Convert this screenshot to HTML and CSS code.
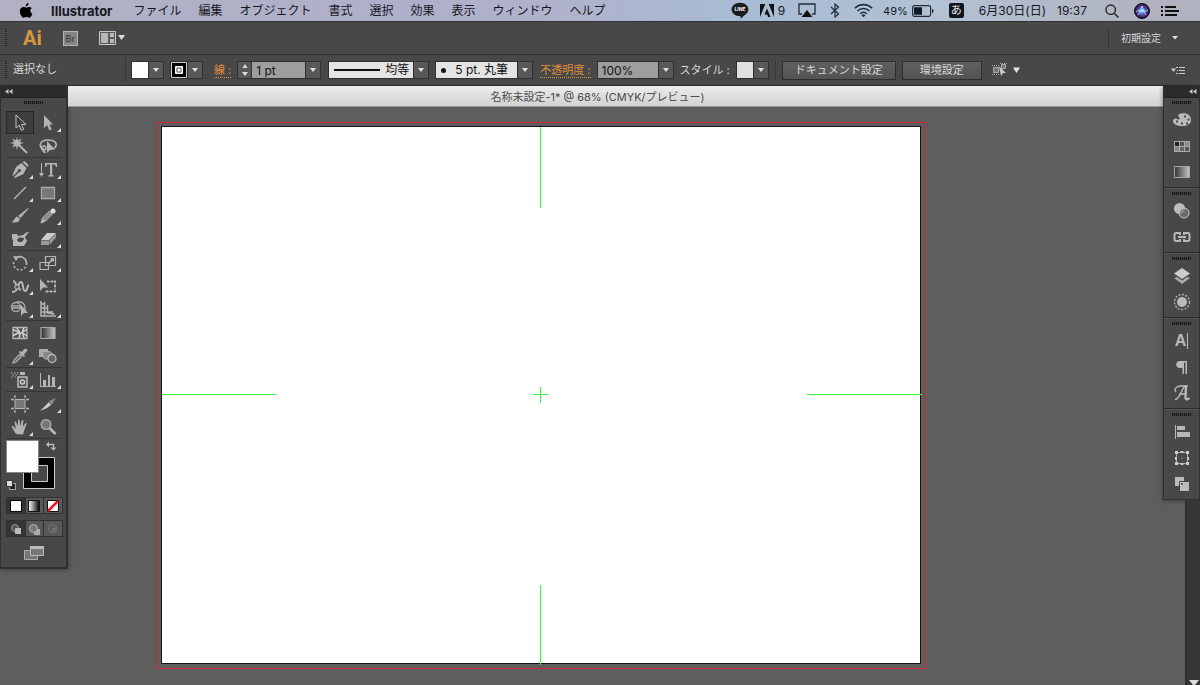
FILE: index.html
```html
<!DOCTYPE html>
<html lang="ja">
<head>
<meta charset="utf-8">
<title>Illustrator</title>
<link rel="stylesheet" href="styles.css">
</head>
<body>
<svg class="defs" aria-hidden="true">
  <defs>
    <linearGradient id="ramp"><stop offset="0" stop-color="#303030"/><stop offset="1" stop-color="#c8c8c8"/></linearGradient>
    <linearGradient id="ramp-rev"><stop offset="0" stop-color="#fff"/><stop offset="1" stop-color="#000"/></linearGradient>
    <radialGradient id="siri"><stop offset="0" stop-color="#d6f4ff"/><stop offset=".35" stop-color="#3d86d8"/><stop offset=".65" stop-color="#6a2a8c"/><stop offset="1" stop-color="#11132c"/></radialGradient>
    <symbol id="down" viewBox="0 0 8 6"><path fill="#e0e0e0" d="M1 1h6L4 5z"/></symbol>
  </defs>
</svg>

<header class="menubar">
  <button class="apple" aria-label="アップルメニュー"><svg width="14" height="16" viewBox="0 0 14 16"><path d="M9.6 0c.1 1.600-1.200 3.200-2.800 3.200C6.600 1.700 8 .2 9.600 0zM12.800 5.300c-2.200 1.400-1.900 4.400.6 5.400-.7 2-2 4-3.300 4-1 0-1.500-.6-2.700-.6s-1.700.6-2.700.6C3 14.700.8 11.300.8 8.300c0-2.800 1.800-4.400 3.600-4.400 1.200 0 2 .7 2.900.7.800 0 1.800-.8 3.200-.7 1 .1 1.800.5 2.300 1.400z"/></svg></button>
  <nav class="menus">
    <button class="app-name">Illustrator</button>
    <button>ファイル</button>
    <button>編集</button>
    <button>オブジェクト</button>
    <button>書式</button>
    <button>選択</button>
    <button>効果</button>
    <button>表示</button>
    <button>ウィンドウ</button>
    <button>ヘルプ</button>
  </nav>
  <div class="status">
    <svg width="18" height="17" viewBox="0 0 18 17"><path fill="#1b1b1b" d="M9 .8c4.700 0 8.400 2.900 8.400 6.600 0 3.300-3 5-7.400 9-.5 0-.4-1.500-.6-2.300C4.300 14.200.6 11.200.6 7.400.6 3.700 4.300.8 9 .8z"/><text class="line-mark" x="9" y="9">LINE</text></svg>
    <span class="adobe"><svg width="14" height="13" viewBox="0 0 14 13"><path fill="#111" d="M0 0h5.300L0 13zM8.700 0H14v13zM7 4.500l3.500 8.500H8.200l-1-2.600H4.500z"/></svg>9</span>
    <svg width="18" height="15" viewBox="0 0 18 15"><path fill="none" stroke="#222b3a" stroke-width="1.300" d="M4 11H1V1h16v10h-3"/><path fill="#111" d="M9 7l5.500 7h-11z"/></svg>
    <svg class="bluetooth" width="10" height="15" viewBox="0 0 10 15"><path fill="none" stroke="#222b3a" stroke-width="1.200" d="M1 4l7.500 7L5 14V1l3.500 3L1 11"/></svg>
    <svg class="wifi" width="19" height="15" viewBox="0 0 19 15"><g fill="none" stroke="#222b3a" stroke-width="1.600"><path d="M.8 5.200a12.300 12.300 0 0 1 17.400 0"/><path d="M3.500 8a8.500 8.500 0 0 1 12 0"/><path d="M6.200 10.700a4.700 4.700 0 0 1 6.600 0"/></g><path fill="#222b3a" d="M7.600 12.200a2.700 2.700 0 0 1 3.800 0L9.500 14.200z"/></svg>
    <span class="battery">49%<svg width="22" height="12" viewBox="0 0 22 12"><rect x=".6" y=".6" width="18" height="10.800" rx="1.800" fill="none" stroke="#222b3a" stroke-width="1.200"/><path fill="#111827" d="M2 2.200h8v7.600H2zM20 4c2 .7 2 3.300 0 4z"/></svg></span>
    <span class="ime">あ</span>
    <time class="clock"><span>6月30日(日)</span><span>19:37</span></time>
    <svg class="search" width="14" height="14" viewBox="0 0 14 14"><g fill="none" stroke="#222" stroke-width="1.400"><circle cx="5.700" cy="5.700" r="4.700"/><path d="M9 9l4.500 4.500"/></g></svg>
    <svg class="siri" width="16" height="16" viewBox="0 0 16 16"><circle cx="8" cy="8" r="7.500" fill="url(#siri)" stroke="#0b1028"/><path d="M2 9c4-4 8 1 12-2M4 12c2-3 3-6 4-9 1 3 2 6 4 9" fill="none" stroke="#b9e9f6" stroke-width=".8"/></svg>
    <svg class="list" width="18" height="12" viewBox="0 0 18 12"><path stroke="#111" stroke-width="1.800" d="M0 2h2M0 6h2M0 10h2M4 2h11M4 6h14M4 10h12"/></svg>
  </div>
</header>

<div class="appbar">
  <i class="grip-v"></i>
  <span class="ai">Ai</span>
  <button class="bridge">Br</button>
  <button class="arrange" aria-label="ドキュメントレイアウト"><svg width="26" height="14" viewBox="0 0 26 14"><path fill="#5a5a5a" stroke="#c8c8c8" d="M.5.5h16v13H.5z"/><path fill="#b8b8b8" d="M2 2h7v10H2zM11 2h4v4h-4zM11 8h4v4h-4z"/><path fill="#ddd" d="M19 4h7l-3.500 5z"/></svg></button>
  <button class="workspace">初期設定<svg width="6" height="4" viewBox="0 0 6 4"><path fill="#ddd" d="M0 0h6L3 3.500z"/></svg></button>
</div>

<div class="control">
  <i class="grip-v"></i>
  <span class="selection">選択なし</span>
  <div class="combo fill"><button class="swatch white" aria-label="塗り"></button><button class="drop" aria-label="塗りメニュー"><svg width="8" height="6"><use href="#down"/></svg></button></div>
  <div class="combo stroke"><button class="swatch ring" aria-label="線"><svg width="16" height="16" viewBox="0 0 16 16"><path d="M0 0h16v16H0z"/><path d="M.5.5h15v15H.5z" fill="none" stroke="#ccc"/><path d="M4.500 4.500h7v7h-7z" fill="#eee" stroke="#fff"/><path d="M6 6h4v4H6z" fill="#fff" stroke="#555"/></svg></button><button class="drop" aria-label="線メニュー"><svg width="8" height="6"><use href="#down"/></svg></button></div>
  <label class="link" for="weight">線 :</label>
  <div class="combo weight"><div class="stepper"><button aria-label="増やす"><svg width="8" height="6" viewBox="0 0 8 6"><path fill="#ddd" d="M1.500 5h5L4 1z"/></svg></button><button aria-label="減らす"><svg width="8" height="6"><use href="#down"/></svg></button></div><input id="weight" value="1 pt"><button class="drop" aria-label="線幅"><svg width="8" height="6"><use href="#down"/></svg></button></div>
  <div class="combo profile"><i class="line-sample"></i><select aria-label="プロファイル"><option>均等</option></select><button class="drop" aria-label="プロファイル一覧"><svg width="8" height="6"><use href="#down"/></svg></button></div>
  <div class="combo brush"><i class="dot-sample"></i><select aria-label="ブラシ"><option>5 pt. 丸筆</option></select><button class="drop" aria-label="ブラシ一覧"><svg width="8" height="6"><use href="#down"/></svg></button></div>
  <label class="link opacity-label" for="opacity">不透明度 :</label>
  <div class="combo opacity"><input id="opacity" value="100%"><button class="drop" aria-label="不透明度一覧"><svg width="8" height="6"><use href="#down"/></svg></button></div>
  <span class="style-label">スタイル :</span>
  <div class="combo style"><button class="swatch pale" aria-label="スタイル"></button><button class="drop" aria-label="スタイル一覧"><svg width="8" height="6"><use href="#down"/></svg></button></div>
  <div class="actions"><button class="push">ドキュメント設定</button><button class="push prefs">環境設定</button></div>
  <button class="similar" aria-label="類似オブジェクトを選択"><svg width="28" height="14" viewBox="0 0 28 14"><path fill="#777" stroke="#aaa" d="M1.500 4.500h5v5h-5zM9.500 1.500h4v4h-4z"/><path stroke="#aaa" stroke-dasharray="1 1" d="M0 2.500h8M0 11.500h8M8 .5h7"/><path fill="#ccc" d="M7 3l7 7h-3l-2 3z"/><path fill="#e6e6e6" d="M21 4.500h7L24.500 10z"/></svg></button>
  <button class="panel-menu" aria-label="パネルメニュー"><svg width="14" height="9" viewBox="0 0 14 9"><path fill="#ccc" d="M0 2.500h5L2.500 6z"/><path stroke="#ccc" d="M5 1.500h2M8 1.500h6M6 4.500h1M8 4.500h6M5 7.500h2M8 7.500h6"/></svg></button>
</div>

<main class="work">
  <aside class="tools">
    <div class="panel-head"><svg width="8" height="5" viewBox="0 0 8 5"><path fill="#ccc" d="M3.500 0v5L0 2.500zM7.500 0v5L4 2.500z"/></svg></div>
    <i class="grip-h"></i>
    <div class="group">
      <button class="active" aria-label="選択"><svg viewBox="0 0 20 20"><path fill="#3b3b3b" stroke="#c4c4c4" d="M6 2v13l3.200-2.800 2.200 5.200 2.300-1-2.200-5H16z"/></svg></button>
      <button class="more" aria-label="ダイレクト選択"><svg viewBox="0 0 20 20"><path d="M6 2v13l3.200-2.800 2.200 5.200 2.300-1-2.200-5H15z"/></svg></button>
      <button aria-label="自動選択"><svg viewBox="0 0 20 20"><path d="M7 1l1 3.500 3.500-2L10 6l4 1-4 1 1.500 3.500L8 10l-1 4-1-4-3.500 1.500L4 8 0 7l4-1L2.500 2.500 6 4.500z"/><path stroke="#b4b4b4" stroke-width="2" d="M9.500 9.500L17 17"/></svg></button>
      <button aria-label="なげなわ"><svg viewBox="0 0 20 20"><path fill="none" stroke="#b4b4b4" stroke-width="1.700" d="M6 13C0 12 1 4 10 4s10 6 6 8M6 10c-3 0-3 4 0 4s2-4 0-4m-1 4c0 2 2 2 2 3"/><path d="M9 5v12l3-3 5-.5z"/></svg></button>
    </div>
    <div class="group">
      <button class="more" aria-label="ペン"><svg viewBox="0 0 20 20"><path d="M11.500 3l5 5-3 6L5 18l-1-1 5-5a1.500 1.500 0 1 0-1-1l-5 5-.5-1L6 7zM12.500 2l2-1 4 4-1 2z"/></svg></button>
      <button class="more" aria-label="文字"><svg viewBox="0 0 20 20"><path d="M7 3h12v4h-1l-1-2.500h-2.800V15l2 .8v.8H10v-.8l2-.8V4.500H9L8 7H7zM3 3h1v10h2l-2.500 4L1 13h2z"/></svg></button>
      <button class="more" aria-label="直線"><svg viewBox="0 0 20 20"><path stroke="#b4b4b4" stroke-width="1.500" d="M4 16L16 4"/></svg></button>
      <button class="more" aria-label="長方形"><svg viewBox="0 0 20 20"><path fill="#777" stroke="#aaa" stroke-width="1.300" d="M3.500 4.500h13v11h-13z"/></svg></button>
      <button aria-label="ブラシ"><svg viewBox="0 0 20 20"><path d="M18 2l.5.800L10.500 12 8.300 9.800zM7.500 10.500l2.400 2.300C9 17 5 17 1.500 16c3-1 3-5 6-5.500z"/></svg></button>
      <button class="more" aria-label="鉛筆"><svg viewBox="0 0 20 20"><path fill="#8c8c8c" stroke="#b4b4b4" d="M3 17l1.500-5 7-7 3 3-7 7z"/><circle cx="15" cy="5" r="2.500" fill="#ddd"/><path d="M2.500 17.500l2-5 3 3z"/></svg></button>
      <button aria-label="塗りブラシ"><svg viewBox="0 0 20 20"><path fill-rule="evenodd" d="M2 5h5l1 2c3 0 3-1 5-1l4-3h2l-4 5 2 4-3 5H3v-6l-1-1zm5 6c2 4 7 2 7-2-2 0-5-2-7 2z"/></svg></button>
      <button class="more" aria-label="消しゴム"><svg viewBox="0 0 20 20"><path fill="#ccc" d="M9 4h9l-7 7H3z"/><path fill="#999" d="M3 11.500h8V16H3zM11.500 11L18 4.500v4L11.500 16z"/></svg></button>
    </div>
    <div class="group">
      <button class="more" aria-label="回転"><svg viewBox="0 0 20 20"><path fill="none" stroke="#b4b4b4" stroke-width="1.700" d="M7 4.500A6.500 6.500 0 0 1 16.500 10"/><path fill="none" stroke="#b4b4b4" stroke-width="1.700" stroke-dasharray="2 2" d="M16.500 10A6.500 6.500 0 1 1 4 8"/><path d="M3 3l6 .5L6 8z"/></svg></button>
      <button class="more" aria-label="拡大・縮小"><svg viewBox="0 0 20 20"><path fill="none" stroke="#b4b4b4" stroke-width="1.200" d="M7.500 3.500h10v9h-10zM2 9.500h8.500v7H2z"/><path d="M12 5h4v4l-1.300-1.300L11 11l-1-1 3.300-3.700z"/></svg></button>
      <button class="more" aria-label="線幅"><svg viewBox="0 0 20 20"><path fill="none" stroke="#b4b4b4" stroke-width="2" d="M2 16c8 0 5-10 9-10 3 0 1 9 4 9s2-6 4-6M3 5c3 0 4 8 8 9"/><circle cx="7" cy="11" r="2.200" fill="#555" stroke="#ccc"/></svg></button>
      <button aria-label="自由変形"><svg viewBox="0 0 20 20"><path d="M2 3v12l3-3.500h5z"/><path fill="none" stroke="#999" d="M9 5.500h8v10H7"/><path d="M9 4.500h2v2H9zM13 4.500h2v2h-2zM16 4.500h2v2h-2zM16 9h2v2h-2zM16 14.500h2v2h-2zM12 14.500h2v2h-2zM8 14.500h2v2H8z"/></svg></button>
      <button class="more" aria-label="シェイプ形成"><svg viewBox="0 0 20 20"><g fill="none" stroke="#aaa" stroke-width="1.300"><circle cx="6" cy="8" r="4.500"/><path d="M5 4c3-2 9-2 10 4v3M2 7h9M2 9h9"/></g><path d="M11 6v11l2.700-3H18z"/></svg></button>
      <button class="more" aria-label="遠近グリッド"><svg viewBox="0 0 20 20"><path fill="none" stroke="#b4b4b4" stroke-width="1.500" d="M3 2v15h15M3 13h12M3 9h7M3 5h4M6.500 3v14M9.500 6v8l7 1"/></svg></button>
    </div>
    <div class="group">
      <button aria-label="メッシュ"><svg viewBox="0 0 20 20"><path fill="#555" stroke="#b4b4b4" stroke-width="1.300" d="M3 4.500h14v11H3z"/><path fill="none" stroke="#ccc" stroke-width="1.500" d="M3 7c5 0 5 4 8 3s3-3 6-3M3 13c3-3 5-3 8-3s4 2 6 3M7 5c1 3 5 4 2 10M14 5c-3 4-1 7 0 10"/></svg></button>
      <button aria-label="グラデーション"><svg viewBox="0 0 20 20"><path fill="url(#ramp)" stroke="#aaa" stroke-width="1.200" d="M3 4.500h14v11H3z"/></svg></button>
      <button class="more" aria-label="スポイト"><svg viewBox="0 0 20 20"><path fill="#666" stroke="#b4b4b4" stroke-width="1.200" d="M3 17l1-3 6-6 2 2-6 6z"/><path d="M9 6l1-1 2 1c2-4 6-4 5-1-1 2-3 3-3 3l1 2-1 1z"/></svg></button>
      <button aria-label="ブレンド"><svg viewBox="0 0 20 20"><path d="M1 3h9v2H6v6H1z" fill="#aaa"/><path d="M5 5.500h7l2 2V13H7l-2-2z" fill="#888" stroke="#aaa"/><circle cx="14" cy="12.500" r="4" fill="#666" stroke="#bbb" stroke-width="1.300"/></svg></button>
    </div>
    <div class="group">
      <button class="more" aria-label="シンボルスプレー"><svg viewBox="0 0 20 20"><path d="M10 2h5v3h-5z"/><path fill="#555" stroke="#bbb" stroke-width="1.500" d="M8 7h9v10H8z"/><circle cx="12.500" cy="12" r="2" fill="none" stroke="#ccc" stroke-width="1.500"/><path stroke="#aaa" stroke-dasharray="1.500 1.500" d="M1 3h8M2.500 5h6M1 7h5"/></svg></button>
      <button class="more" aria-label="グラフ"><svg viewBox="0 0 20 20"><path d="M2 3h1v13h15v1H2zM5 10h3v6H5zM10 5h2v11h-2zM14 7h3v9h-3z"/></svg></button>
    </div>
    <div class="group">
      <button aria-label="アートボード"><svg viewBox="0 0 20 20"><path fill="#777" stroke="#b4b4b4" d="M5 5.500h10v9H5z"/><path stroke="#b4b4b4" stroke-width="1.300" d="M1 5.500h3M16 5.500h3M1 14.500h3M16 14.500h3M5 1v3M15 1v3M5 16v3M15 16v3"/></svg></button>
      <button class="more" aria-label="スライス"><svg viewBox="0 0 20 20"><path fill="#ccc" d="M2 17l9-9 2 3-4 3z"/><path fill="#888" d="M11 7l7-3-4.500 7z"/></svg></button>
      <button class="more" aria-label="手のひら"><svg viewBox="0 0 20 20"><path d="M6 17L1.500 9.500l1.300-.8L6 12 4.500 5l1.300-.5L8 9.500V2.700h1.500l.8 6.500L12 3l1.400.3-.6 6.700L15.500 6l1.200.6-2.500 7-1.200 4z"/></svg></button>
      <button aria-label="ズーム"><svg viewBox="0 0 20 20"><circle cx="8" cy="7.500" r="4.700" fill="#777" stroke="#aaa" stroke-width="1.600"/><path stroke="#bbb" stroke-width="2.500" d="M11.500 11l6 6"/></svg></button>
    </div>
    <div class="colors">
      <svg width="54" height="54" viewBox="0 0 54 54"><path fill="#000" stroke="#ccc" d="M22.500 18.500h31v31h-31z"/><path fill="#484848" stroke="#ccc" d="M30.500 26.500h16v16h-16z"/><path fill="#fff" stroke="#888" d="M5.500 1.500h32v32h-32z"/><path fill="none" stroke="#bbb" stroke-width="1.300" d="M47 5.500h5.500V10"/><path fill="#bbb" d="M48 2.500v6l-3-3zM49.500 8.500h6l-3 3z"/><path fill="#222" stroke="#aaa" d="M8.500 44.500h6v6h-6z"/><path fill="#ddd" stroke="#333" d="M5.500 41.500h6v6h-6z"/></svg>
    </div>
    <div class="triple paint">
      <button class="on" aria-label="カラー"><svg width="12" height="12"><path fill="#fff" stroke="#000" d="M.5.5h11v11H.5z"/></svg></button>
      <button aria-label="グラデーション塗り"><svg width="12" height="12"><path fill="url(#ramp-rev)" stroke="#111" d="M.5.5h11v11H.5z"/></svg></button>
      <button aria-label="なし"><svg width="12" height="12"><path fill="#fff" stroke="#111" d="M.5.5h11v11H.5z"/><path stroke="#f0141e" stroke-width="2.500" d="M1 11L11 1"/></svg></button>
    </div>
    <div class="triple modes">
      <button class="on" aria-label="標準描画"><svg width="12" height="12"><circle cx="5" cy="5" r="3.500" fill="#555" stroke="#999"/><path fill="#bbb" d="M5 5h6v6H5z"/></svg></button>
      <button aria-label="背面描画"><svg width="12" height="12"><path fill="#aaa" d="M6 6h6v6H6z"/><circle cx="5.500" cy="5.500" r="4" fill="#777" stroke="#bbb"/></svg></button>
      <button aria-label="内側描画" disabled><svg width="12" height="12"><circle cx="5.500" cy="5.500" r="4" fill="none" stroke="#777"/><path fill="#777" d="M5 5h4L6 9z"/></svg></button>
    </div>
    <button class="screen" aria-label="スクリーンモード"><svg width="20" height="16" viewBox="0 0 20 16"><path fill="#777" stroke="#aaa" d="M.5 5.500h13v9H.5z"/><path fill="#777" stroke="#bbb" d="M6.500 1.500h13v9h-13z"/><path fill="#bbb" d="M6 1h14v3H6z"/></svg></button>
  </aside>

  <section class="document">
    <h1 class="doc-title">名称未設定-1* @ 68% (CMYK/プレビュー)</h1>
    <div class="canvas">
      <div class="bleed">
        <div class="artboard">
          <svg class="guides" width="100%" height="100%" viewBox="0 0 758 536"><path stroke="#3ef53e" fill="none" d="M378.500 0v81M378.500 458v80M0 267.500h114M645 267.500h115M371 267.500h15M378.500 260v16"/></svg>
        </div>
      </div>
    </div>
  </section>

  <div class="right">
    <aside class="dock">
      <div class="panel-head"><svg width="8" height="5" viewBox="0 0 8 5"><path fill="#ccc" d="M3.500 0v5L0 2.500zM7.500 0v5L4 2.500z"/></svg></div>
      <div class="dock-group">
        <i class="grip-h"></i>
        <button aria-label="カラー"><svg viewBox="0 0 20 20"><path fill="#bbb" fill-rule="evenodd" d="M7 4c7-2 12 1 12 6 0 4-4 6-9 6S1 14 1 11c0-2 2-3 4-2s4 0 2-2c-1-1-1-2 0-3zm5 1.500v2h2v-2zm3.500 3v2h2v-2zm-1.500 4v2h2v-2zm-5 0v2h2v-2zm-5-2v2h2v-2z"/></svg></button>
        <button aria-label="スウォッチ"><svg viewBox="0 0 20 20"><path fill="#aaa" d="M2 5h16v11H2z"/><path fill="#222" d="M3 6h4v4H3z"/><path fill="#555" d="M8 6h4v4H8zM13 11h4v4h-4z"/><path fill="#888" d="M13 6h4v4h-4zM3 11h4v4H3z"/><path fill="#666" d="M8 11h4v4H8z"/></svg></button>
        <button aria-label="グラデーションパネル"><svg viewBox="0 0 20 20"><path fill="url(#ramp)" stroke="#aaa" d="M2.500 4.500h15v11h-15z"/></svg></button>
      </div>
      <div class="dock-group">
        <i class="grip-h"></i>
        <button aria-label="透明"><svg viewBox="0 0 20 20"><circle cx="7.500" cy="7.500" r="5.500" fill="#bbb"/><circle cx="12" cy="12" r="5" fill="#777" fill-opacity=".7" stroke="#ccc"/></svg></button>
        <button aria-label="リンク"><svg viewBox="0 0 20 20"><path fill="none" stroke="#b8b8b8" stroke-width="2" d="M8 8V6H4Q2.500 6 2.500 8v4q0 2 1.500 2h4v-2M12 8V6h4q1.500 0 1.500 2v4q0 2-1.500 2h-4v-2M6 10h8"/></svg></button>
      </div>
      <div class="dock-group">
        <i class="grip-h"></i>
        <button aria-label="レイヤー"><svg viewBox="0 0 20 20"><path fill="#ccc" d="M10 2l8 5.500-8 5.500-8-5.500z"/><path fill="#aaa" d="M2 12l3-1 5 3.500 5-3.500 3 1-8 6z"/></svg></button>
        <button aria-label="アピアランス"><svg viewBox="0 0 20 20"><circle cx="10" cy="10" r="5" fill="#bbb"/><circle cx="10" cy="10" r="7.500" fill="none" stroke="#aaa" stroke-width="1.500" stroke-dasharray="2 1.500"/></svg></button>
      </div>
      <div class="dock-group">
        <i class="grip-h"></i>
        <button class="glyph" aria-label="文字パネル">A<i class="caret"></i></button>
        <button aria-label="段落"><svg viewBox="0 0 20 20"><path fill="#bbb" d="M8 4h7v13h-1.500V5.500H12V17h-1.500v-6H8c-5 0-5-7 0-7z"/></svg></button>
        <button aria-label="文字スタイル"><svg viewBox="0 0 20 20"><path fill="none" stroke="#bbb" stroke-width="1.300" d="M4 9C1 6 5 3 9 3h7M13 3C9 7 8 16 3 16.500M7 11h7"/><path fill="none" stroke="#bbb" stroke-width="2.300" d="M14 3l-.5 11c0 3 2 3 4 1"/></svg></button>
      </div>
      <div class="dock-group">
        <i class="grip-h"></i>
        <button aria-label="整列"><svg viewBox="0 0 20 20"><path fill="#b8b8b8" d="M3 3h1v14H3zM5 4h8v4H5zM5 10h13v5H5z"/></svg></button>
        <button aria-label="変形"><svg viewBox="0 0 20 20"><path fill="none" stroke="#aaa" d="M4.500 4.500h11v11h-11z"/><path fill="#ccc" d="M3 3h3v3H3zM8.500 3h3v2h-3zM14 3h3v3h-3zM3 9h2v3H3zM15 9h2v3h-2zM3 14h3v3H3zM8.500 15h3v2h-3zM14 14h3v3h-3zM9.500 9.500h1v1h-1z"/></svg></button>
        <button aria-label="パスファインダー"><svg viewBox="0 0 20 20"><path fill="#bbb" d="M3 3h9v9H3z"/><path fill="#bbb" stroke="#444" d="M7.500 7.500h10v10h-10z"/><path fill="#555" stroke="#ccc" d="M8.500 8.500h3v3h-3z"/></svg></button>
      </div>
    </aside>
    <div class="scrollbar"><svg width="10" height="8" viewBox="0 0 10 8"><path fill="#ddd" d="M0 3h10L6 8H4z"/></svg></div>
  </div>
</main>
</body>
</html>
```
FILE: styles.css
```css
* { box-sizing: border-box; }
html, body { height: 100%; }
body {
  margin: 0;
  display: flex;
  flex-direction: column;
  overflow: hidden;
  background: #5e5e5e;
  font: 12px/16px Inter, "Noto Sans CJK JP", sans-serif;
  color: #d8d8d8;
}
button, input, select {
  margin: 0;
  padding: 0;
  border: 0;
  border-radius: 0;
  background: none;
  color: inherit;
  font: inherit;
}
button, .status, label, .selection, .style-label { white-space: nowrap; }
svg { display: block; flex: none; }
.defs { position: absolute; width: 0; height: 0; }

/* System menu bar */
.menubar {
  flex: none;
  height: 21px;
  display: flex;
  align-items: center;
  padding: 0 21px 0 19px;
  background: linear-gradient(90deg, #b1b1c3, #aeb0ca 35%, #b0b2cb 46%, #a8bbd4 62%, #b2c1d3 78%, #b1b2bf 96%);
  color: #15171f;
}
.menus { display: flex; gap: 17px; margin-left: 18px; }
.menus .app-name { margin-right: 4px; font-size: 13px; font-weight: 700; }
.status { display: flex; align-items: center; margin-left: auto; }
.line-mark { font: 700 5px Inter, sans-serif; fill: #fff; text-anchor: middle; }
.adobe { display: flex; align-items: center; gap: 4px; margin: 0 13px 0 11px; }
.bluetooth, .wifi { margin-left: 14px; }
.battery { display: flex; align-items: center; gap: 4px; margin-left: 10px; font-size: 11px; }
.ime {
  width: 15px;
  height: 15px;
  margin: 0 15px 0 15px;
  border-radius: 2px;
  background: #11131e;
  color: #e8e8f0;
  font-size: 11px;
  line-height: 14px;
  text-align: center;
}
.clock { display: flex; gap: 11px; }
.search { margin-left: 18px; }
.siri { margin-left: 15px; }
.list { margin-left: 11px; }

/* Application bar */
.appbar {
  flex: none;
  height: 34px;
  display: flex;
  align-items: center;
  padding: 0 22px 0 5px;
  background: #484848;
  border-top: 1px solid #303030;
  border-bottom: 1px solid #303030;
}
.grip-v {
  width: 2px;
  height: 18px;
  background: repeating-linear-gradient(#202020 0 1px, #505050 1px 2px);
}
.grip-h {
  display: block;
  width: 19px;
  height: 3px;
  margin: 0 auto;
  background: repeating-linear-gradient(90deg, #181818 0 1px, #3c3c3c 1px 2px);
}
.ai { margin-left: 16px; color: #db963f; font: 700 20px/24px Roboto, sans-serif; }
.bridge {
  width: 15px;
  height: 15px;
  margin-left: 21px;
  border: 1px solid #b4b4b4;
  background: #858585;
  color: #333;
  font-size: 9px;
  line-height: 13px;
}
.arrange { margin-left: 21px; }
.workspace {
  display: flex;
  align-items: center;
  gap: 11px;
  height: 19px;
  margin-left: auto;
  padding-left: 12px;
  border-left: 1px solid #353535;
  font-size: 10px;
}

/* Control panel */
.control {
  flex: none;
  height: 31px;
  display: flex;
  align-items: center;
  padding: 0 15px 0 5px;
  background: #484848;
  border-bottom: 1px solid #2c2c2c;
  font-size: 11px;
}
.selection { width: 113px; height: 24px; margin-left: 6px; border-right: 1px solid #383838; line-height: 22px; }
.combo {
  display: flex;
  height: 18px;
  border: 1px solid #303030;
  background: #e4e4e4;
  color: #111;
  font-size: 12px;
}
.drop {
  width: 15px;
  flex: none;
  display: grid;
  place-items: center;
  border-left: 1px solid #303030;
  background: #585858;
}
.swatch { width: 16px; flex: none; }
.white { background: #fff; }
.pale { background: #e0e0e0; }
.fill { margin-left: 5px; }
.stroke { margin-left: 6px; }
.link { color: #e08e3a; border-bottom: 1px dotted #e08e3a; line-height: 14px; margin-left: 11px; }
.weight { width: 84px; margin-left: 6px; }
.stepper { width: 14px; flex: none; display: grid; background: #585858; border-right: 1px solid #303030; }
.stepper button { display: grid; place-items: center; }
.combo input { flex: 1; min-width: 0; padding: 2px 4px 0; background: #9e9e9e; }
.profile { width: 101px; margin-left: 7px; }
.combo select { flex: 1; min-width: 0; appearance: none; }
.line-sample { width: 46px; height: 2px; margin: 7px 5px 0; background: #111; }
.brush { width: 98px; margin-left: 6px; }
.dot-sample { width: 5px; height: 5px; margin: 6px 9px 0 5px; border-radius: 50%; background: #111; }
.link.opacity-label { margin-left: 7px; }
.opacity { width: 77px; margin-left: 6px; }
.style-label { margin-left: 6px; }
.style { margin-left: 6px; }
.actions { display: flex; gap: 6px; margin-left: 6px; padding-left: 6px; border-left: 1px solid #383838; }
.push {
  height: 19px;
  padding: 0 12px;
  border: 1px solid #2e2e2e;
  background: linear-gradient(#606060, #535353);
  line-height: 16px;
}
.push.prefs { padding: 0 17px; }
.similar { margin-left: 10px; }
.panel-menu { margin-left: auto; }

/* Tool panel */
.work { flex: 1; min-height: 0; display: flex; align-items: stretch; }
.tools {
  width: 68px;
  flex: none;
  align-self: flex-start;
  padding-bottom: 6px;
  background: #484848;
  border: 1px solid #303030;
  border-width: 0 2px 2px 1px;
  box-shadow: 1px 1px 4px #0005;
}
.panel-head { height: 12px; display: flex; align-items: center; padding-left: 4px; background: #2b2b2b; border-bottom: 1px solid #222; }
.tools > .grip-h { margin: 3px auto 7px; }
.group {
  display: grid;
  grid-template-columns: 28px 28px;
  grid-auto-rows: 23px;
  margin: 0 4px 0 5px;
  border-bottom: 1px solid #353535;
}
.group button { position: relative; display: grid; place-items: center; border: 1px solid transparent; }
.group svg { width: 20px; height: 20px; fill: #b4b4b4; }
.group .active { border-color: #272727; background: #3d3d3d; }
.more::after {
  content: "";
  position: absolute;
  right: 0;
  bottom: 1px;
  border: 2px solid;
  border-color: transparent #ddd #ddd transparent;
}
.colors svg { overflow: visible; }
.triple { display: grid; grid-template-columns: repeat(3, 1fr); width: 57px; height: 17px; margin: 0 0 6px 5px; border: 1px solid #303030; background: #303030; gap: 1px; }
.triple button { display: grid; place-items: center; background: #585858; }
.triple .on { background: #353535; }
.paint { margin-top: 4px; }
.screen { display: block; margin: 8px auto 0; }

/* Document */
.document { flex: 1; min-width: 0; display: flex; flex-direction: column; }
.doc-title {
  flex: none;
  height: 21px;
  margin: 0;
  padding-right: 36px;
  background: linear-gradient(#ececec, #d2d2d2);
  border-bottom: 1px solid #999;
  color: #4c4c4c;
  font-size: 11px;
  font-weight: 400;
  line-height: 22px;
  text-align: center;
}
.canvas { flex: 1; min-height: 0; padding: 15px 238px 16px 88px; }
.bleed { height: 100%; padding: 3px 3px 4px 4px; border: 1px solid #cf2633; }
.artboard { height: 100%; border: 1px solid #141414; background: #fff; }
.guides { overflow: visible; }

/* Panel dock */
.right { width: 37px; flex: none; display: flex; flex-direction: column; }
.dock { background: #484848; border: 1px solid #303030; border-top: 0; box-shadow: -1px 1px 4px #0005; }
.dock .panel-head { justify-content: flex-end; padding-right: 2px; }
.dock-group { display: flex; flex-direction: column; padding: 3px 0 2px; border-bottom: 1px solid #2c2c2c; }
.dock-group + .dock-group { border-top: 1px solid #555; }
.dock-group:last-child { border-bottom: 0; }
.dock-group button { height: 26px; display: flex; align-items: center; justify-content: center; }
.dock-group .grip-h { margin-bottom: 3px; }
.dock-group svg { width: 20px; height: 20px; }
.glyph { color: #bbb; font: 700 16px/20px "Liberation Sans", sans-serif; }
.caret { width: 1px; height: 16px; margin-left: 1px; background: #bbb; }
.scrollbar { flex: 1; width: 15px; align-self: flex-end; display: flex; align-items: flex-end; justify-content: center; background: #363636; border-left: 2px solid #2c2c2c; }
```
